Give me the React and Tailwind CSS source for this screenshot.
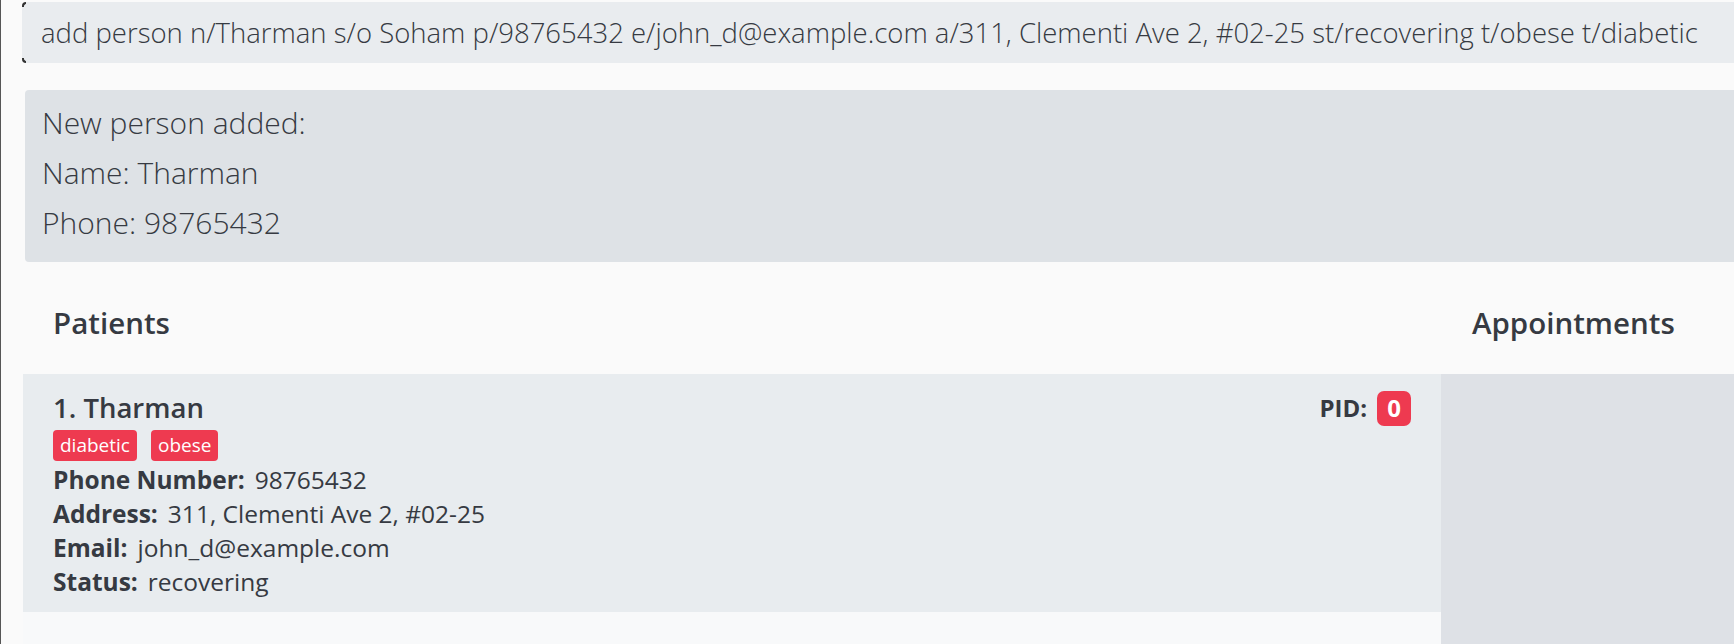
export default function App() {
  const rows = [
    ["Phone Number:", "98765432"],
    ["Address:", "311, Clementi Ave 2, #02-25"],
    ["Email:", "john_d@example.com"],
    ["Status:", "recovering"],
  ];
  return (
    <div className="h-[644px] w-[1734px] overflow-hidden bg-[#fafafa] border-l border-[#555555] font-['Open_Sans',sans-serif] text-[#363a42]">
      <div className="pt-[2px] pl-[21px]">
        <div className="relative h-[61px] mr-[-20px] rounded-[4px] bg-[#e9ecef] flex items-center pl-[19px] text-[27.5px] font-light whitespace-nowrap">
          <span className="absolute left-0 top-0 h-[5px] w-[4px] rounded-tl-[4px] border-l-2 border-t-2 border-[#333333]"></span>
          <span className="absolute left-0 bottom-0 h-[5px] w-[4px] rounded-bl-[4px] border-l-2 border-b-2 border-[#333333]"></span>
          add person n/Tharman s/o Soham p/98765432 e/john_d@example.com a/311, Clementi Ave 2, #02-25 st/recovering t/obese t/diabetic
        </div>
      </div>
      <div className="mt-[27px] ml-[24px] mr-[-20px] rounded-[4px] bg-[#dee2e6] pt-[8px] pb-[14px] pl-[17px] text-[30px] font-light leading-[50px]">
        <div>New person added:</div>
        <div>Name: Tharman</div>
        <div>Phone: 98765432</div>
      </div>
      <div className="ml-[22px] flex h-[383px]">
        <div className="w-[1418px] flex flex-col bg-[#f8f9fa]">
          <div className="h-[112px] bg-[#fafafa] pt-[43px] pl-[30px]">
            <div className="text-[29.5px] font-semibold leading-[36px]">Patients</div>
          </div>
          <div className="h-[238px] bg-[#e8ecef] pt-[17px] pl-[30px] pr-[30px] pb-[13px]">
            <div className="flex h-[34px] items-center justify-between">
              <div className="text-[27.5px] font-semibold leading-[34px]">1. Tharman</div>
              <div className="flex items-center gap-[10px]">
                <span className="text-[24px] font-bold">PID:</span>
                <span className="flex h-[35px] w-[34px] items-center justify-center rounded-[7px] bg-[#ee3a50] text-[24px] font-bold text-white">0</span>
              </div>
            </div>
            <div className="mt-[5px] flex gap-[14px]">
              <span className="flex h-[31px] items-center rounded-[4px] bg-[#ee3a50] px-[7px] text-[19px] font-medium text-white">diabetic</span>
              <span className="flex h-[31px] items-center rounded-[4px] bg-[#ee3a50] px-[7px] text-[19px] font-medium text-white">obese</span>
            </div>
            <div className="mt-[2px]">
              {rows.map(([k, v]) => (
                <div key={k} className="flex gap-[10px] text-[24.5px] leading-[34px]">
                  <span className="font-bold">{k}</span>
                  <span>{v}</span>
                </div>
              ))}
            </div>
          </div>
        </div>
        <div className="flex-1 flex flex-col">
          <div className="h-[112px] bg-[#fafafa] pt-[43px] pl-[31px]">
            <div className="text-[29.5px] font-semibold leading-[36px] whitespace-nowrap">Appointments</div>
          </div>
          <div className="flex-1 bg-[#dee1e6]"></div>
        </div>
      </div>
    </div>
  );
}
